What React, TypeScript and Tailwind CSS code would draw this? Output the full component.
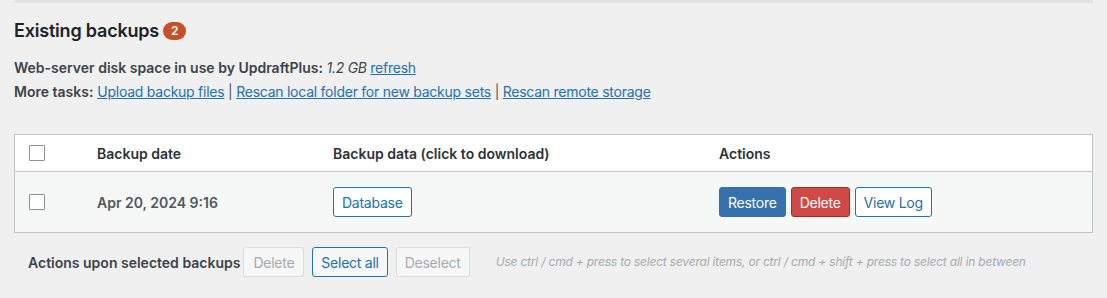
import { useState } from 'react';

const font = { fontFamily: 'Inter, "Liberation Sans", sans-serif' };

export default function App() {
  const [checked, setChecked] = useState<boolean[]>([false]);

  return (
    <div className="min-h-[298px] bg-[#f0f0f1] text-[#1d2327] text-[14px]" style={font}>
      <div className="mx-[14px]">
        <div className="h-[3px] bg-[#e2e3e4]" />

        {/* heading */}
        <h2 className="mt-[17px] flex items-center gap-[4px] text-[18px] font-semibold leading-[22px] tracking-[-0.2px] text-[#1d2327]">
          Existing backups
          <span className="inline-flex h-[18px] min-w-[23px] items-center justify-center rounded-full bg-[#c4512b] px-[7px] text-[12px] font-semibold text-white">
            2
          </span>
        </h2>

        <p className="mt-[16px] leading-[20px] font-semibold text-[#3c434a]">
          Web-server disk space in use by UpdraftPlus:{' '}
          <em className="font-normal tracking-[-0.25px]">1.2 GB</em>{' '}
          <a href="#" className="font-normal tracking-[-0.25px] text-[#2271b1] underline">refresh</a>
        </p>
        <p className="mt-[4px] leading-[20px] text-[#3c434a]">
          <span className="font-semibold">More tasks:</span>{' '}
          <span className="tracking-[-0.25px]">
            <a href="#" className="text-[#2271b1] underline">Upload backup files</a>{' '}
            <span className="text-[#50575e]">|</span>{' '}
            <a href="#" className="text-[#2271b1] underline">Rescan local folder for new backup sets</a>{' '}
            <span className="text-[#50575e]">|</span>{' '}
            <a href="#" className="text-[#2271b1] underline">Rescan remote storage</a>
          </span>
        </p>

        {/* table */}
        <div className="mt-[32px] border border-[#c3c4c7] bg-white">
          <div className="flex h-[37px] items-center border-b border-[#c3c4c7] font-semibold text-[#2c3338]">
            <div className="w-[82px] pl-[14px]">
              <Box />
            </div>
            <div className="w-[236px]">Backup date</div>
            <div className="w-[386px]">Backup data (click to download)</div>
            <div>Actions</div>
          </div>
          <div className="flex h-[60px] items-center bg-[#f6f7f7] tracking-[-0.25px]">
            <div className="w-[82px] pl-[14px]">
              <Box on={checked[0]} toggle={() => setChecked([!checked[0]])} />
            </div>
            <div className="w-[236px] font-semibold tracking-normal text-[#50575e]">Apr 20, 2024 9:16</div>
            <div className="w-[386px]">
              <button className="h-[30px] rounded-[3px] border border-[#2271b1] bg-white px-[8px] text-[#2271b1]">
                Database
              </button>
            </div>
            <div className="flex gap-[5px]">
              <button className="h-[30px] rounded-[3px] border border-[#3571af] bg-[#3571af] px-[8px] text-white">
                Restore
              </button>
              <button className="h-[30px] rounded-[3px] border border-[#a82c27] bg-[#cf4a47] px-[8px] text-white">
                Delete
              </button>
              <button className="h-[30px] rounded-[3px] border border-[#2271b1] bg-white px-[8px] text-[#2271b1]">
                View Log
              </button>
            </div>
          </div>
        </div>

        {/* bulk actions */}
        <div className="mt-[14px] flex items-center pl-[14px]">
          <span className="mr-[3px] font-semibold text-[#3c434a]">Actions upon selected backups</span>
          <button className="h-[30px] rounded-[3px] border border-[#dcdcde] bg-[#f6f7f7] px-[9px] tracking-[-0.25px] text-[#a7aaad]">
            Delete
          </button>
          <button className="ml-[8px] h-[30px] rounded-[3px] border border-[#2271b1] bg-[#f6f7f7] px-[8px] tracking-[-0.25px] text-[#2271b1]">
            Select all
          </button>
          <button className="ml-[8px] h-[30px] rounded-[3px] border border-[#dcdcde] bg-[#f6f7f7] px-[8px] tracking-[-0.25px] text-[#a7aaad]">
            Deselect
          </button>
          <em className="ml-[26px] text-[12px] tracking-[-0.2px] text-[#a7aaad]">
            Use ctrl / cmd + press to select several items, or ctrl / cmd + shift + press to select all in between
          </em>
        </div>
      </div>
    </div>
  );
}

function Box({ on, toggle }: { on?: boolean; toggle?: () => void }) {
  return (
    <span
      onClick={toggle}
      className="block h-[16px] w-[16px] rounded-[1px] border border-[#8c8f94] bg-white"
    >
      {on && <span className="block h-full w-full bg-[#2271b1]" />}
    </span>
  );
}
